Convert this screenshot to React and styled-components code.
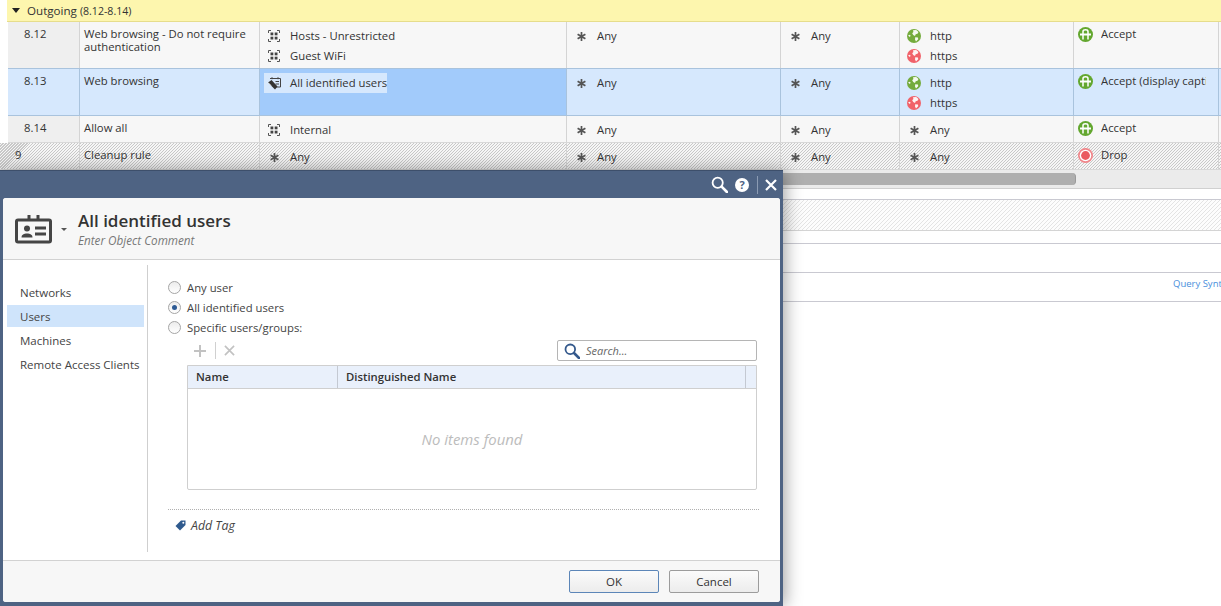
import React from "react";
import styled, { createGlobalStyle, css } from "styled-components";

const Global = createGlobalStyle`
  html, body { margin: 0; padding: 0; background: #fff; }
  body { font-family: "Open Sans", "Noto Sans", sans-serif; font-size: 11.3px; color: #333; }
`;

const hatch = (a, b, pitch) => `repeating-linear-gradient(135deg, ${a} 0 0.71px, ${b} 0.71px ${pitch}px)`;

const Page = styled.div`
  position: relative;
  width: 1221px;
  height: 606px;
  overflow: hidden;
  background: #fff;
`;

const GroupBar = styled.div`
  display: flex;
  align-items: center;
  height: 21px;
  margin-left: 7px;
  padding-left: 5px;
  background: #fdf6ae;
  border-bottom: 1px solid #e6dd8c;
  color: #333;
  gap: 7px;
  font-size: 11.6px;
`;
const Caret = styled.span`
  width: 0; height: 0;
  border-left: 4px solid transparent;
  border-right: 4px solid transparent;
  border-top: 5px solid #222;
`;
const GroupRange = styled.span` font-size: 10.6px; margin-left: -4px; `;

const Row = styled.div`
  display: grid;
  grid-template-columns: ${p => (p.$cleanup ? "80px" : "72px")} 180px 307px 214px 119px 174px 145px 1fr;
  height: ${p => p.$h}px;
  margin-left: ${p => (p.$cleanup ? 0 : 8)}px;
  box-sizing: border-box;
  border-bottom: 1px solid ${p => (p.$selected ? "#a9c3dd" : "#d8d8d8")};
  background: ${p => (p.$selected ? "#d6e8fd" : p.$cleanup ? hatch("#c8c8c8", "#f6f6f6", 2.121) : "#f7f7f7")};
  ${p => p.$beforeSelected && css`border-bottom-color: #a9c3dd;`}
`;
const Cell = styled.div`
  min-width: 0;
  padding-top: 3px;
  border-right: 1px solid ${p => (p.$selected ? "#a9c3dd" : "#d4d4d4")};
  background: ${p => (p.$hot ? "#a2cbfb" : "transparent")};
`;
const NumCell = styled(Cell)`
  padding: 5px 0 0 ${p => (p.$cleanup ? 15 : 16)}px;
  background: ${p => (p.$selected || p.$cleanup ? "transparent" : "#efefef")};
  color: #333;
  line-height: 14px;
`;
const NameCell = styled(Cell)`
  padding: 5px 4px 0 4px;
  line-height: 13px;
`;
const Item = styled.div`
  display: flex;
  align-items: center;
  height: 20px;
  padding-left: 4px;
  gap: 6px;
  white-space: nowrap;
`;
const Chip = styled(Item)`
  width: fit-content;
  box-sizing: border-box;
  margin: 1px 0 0 4px;
  padding: 0 0 2px 0;
  background: #d6e8fd;
`;
const IconSlot = styled.span`
  display: flex;
  align-items: center;
  justify-content: center;
  width: 20px;
  flex: none;
  padding-top: 2px;
`;
const ActionItem = styled.div`
  display: flex;
  align-items: center;
  height: 18px;
  padding-left: 3px;
  gap: 8px;
  margin-top: -1px;
`;
const ActionSlot = styled.span`
  display: flex;
  justify-content: center;
  width: 16px;
  flex: none;
  padding-top: 2px;
`;
const ActionText = styled.span`
  display: block;
  width: 105px;
  overflow: hidden;
  white-space: nowrap;
`;

const ScrollTrack = styled.div`
  height: 19px;
  box-sizing: border-box;
  padding-top: 3px;
  background: #ebebeb;
  border-bottom: 1px solid #d0d0d0;
`;
const ScrollThumb = styled.div`
  width: 1076px;
  height: 12px;
  border-radius: 0 4px 4px 0;
  background: #afafaf;
  border-right: 1px solid #999;
  box-sizing: border-box;
`;
const Band = styled.div`
  height: ${p => p.$h}px;
  border-bottom: 1px solid ${p => p.$line || "#c9c9d1"};
  ${p => p.$hatched && css`background: ${hatch("#e4e4e4", "#fdfdfd", 2.828)};`}
`;
const QueryBand = styled(Band)`
  display: flex;
  align-items: center;
  justify-content: flex-start;
  box-sizing: border-box;
  height: 29px;
  padding: 0 0 8px 1173px;
  white-space: nowrap;
  font-size: 9.5px;
  color: #4a8fdc;
`;

/* Dialog overlay */
const Dialog = styled.div`
  position: absolute;
  left: 0;
  top: 170px;
  width: 783px;
  height: 436px;
  box-sizing: border-box;
  background: #4e6383;
  border-top: 1px solid #3d4f6b;
  padding: 0 3px 4px 3px;
  display: flex;
  flex-direction: column;
  box-shadow: 2px 0 16px rgba(0, 0, 0, 0.38);
`;
const TitleBar = styled.div`
  display: flex;
  align-items: center;
  justify-content: flex-end;
  height: 27px;
  flex: none;
  padding-right: 3px;
`;
const TitleButton = styled.span`
  display: flex;
  align-items: center;
  margin-left: ${p => p.$gap || 0}px;
`;
const TitleDivider = styled.span`
  width: 1px;
  height: 18px;
  background: #8b9bb3;
  margin: 0 7px 0 8px;
`;
const Panel = styled.div`
  flex: 1;
  display: flex;
  flex-direction: column;
  background: #fff;
  border-radius: 3px;
  overflow: hidden;
`;
const Header = styled.div`
  display: flex;
  align-items: flex-start;
  height: 62px;
  flex: none;
  box-sizing: border-box;
  background: #f7f7f7;
  border-bottom: 1px solid #d2d2d2;
  padding: 17px 0 0 12px;
`;
const HeaderCaret = styled.span`
  width: 0; height: 0;
  margin: 13px 0 0 9px;
  border-left: 3px solid transparent;
  border-right: 3px solid transparent;
  border-top: 3px solid #555;
`;
const HeaderText = styled.div`
  margin: -7px 0 0 11px;
`;
const Title = styled.div`
  font-size: 17px;
  font-weight: 600;
  line-height: 26px;
  color: #333;
`;
const Comment = styled.div`
  font-size: 11.7px;
  font-style: italic;
  color: #777;
  line-height: 14px;
  margin-top: -1px;
`;
const Body = styled.div`
  flex: 1;
  display: flex;
  min-height: 0;
`;
const Sidebar = styled.div`
  width: 145px;
  flex: none;
  margin: 5px 0 8px 0;
  padding: 16px 3px 0 4px;
  box-sizing: border-box;
  border-right: 1px solid #cfcfcf;
`;
const NavItem = styled.div`
  height: 22px;
  margin-bottom: 2px;
  padding-left: 13px;
  font-size: 11.5px;
  line-height: 24px;
  color: #444;
  white-space: nowrap;
  ${p => p.$active && css`background: #cfe4fb;`}
`;
const Content = styled.div`
  flex: 1;
  padding: 17px 22px 0 20px;
  min-width: 0;
`;
const RadioRow = styled.div`
  display: flex;
  align-items: center;
  height: 20px;
  gap: 6px;
  color: #444;
`;
const Radio = styled.span`
  display: flex;
  align-items: center;
  justify-content: center;
  width: 13px;
  height: 13px;
  box-sizing: border-box;
  border-radius: 50%;
  border: 1px solid #a5a5a5;
  background: linear-gradient(#ececec, #fff);
  &::after {
    content: "";
    display: ${p => (p.$on ? "block" : "none")};
    width: 5px;
    height: 5px;
    border-radius: 50%;
    background: #2d5a94;
  }
`;
const Toolbar = styled.div`
  display: flex;
  align-items: center;
  height: 21px;
  margin: 3px 0 4px 0;
  padding-left: 25px;
`;
const ToolDivider = styled.span`
  width: 1px;
  height: 17px;
  background: #d0d0d0;
  margin: 0 8px;
`;
const SearchBox = styled.div`
  display: flex;
  align-items: center;
  width: 200px;
  height: 21px;
  margin-left: auto;
  margin-right: 1px;
  box-sizing: border-box;
  border: 1px solid #b5b5b5;
  border-radius: 2px;
  padding-left: 6px;
  gap: 6px;
  font-style: italic;
  font-size: 11px;
  color: #666;
`;
const Grid = styled.div`
  height: 125px;
  margin: 0 1px 0 19px;
  box-sizing: border-box;
  border: 1px solid #cfcfcf;
  border-radius: 0 0 2px 2px;
  display: flex;
  flex-direction: column;
`;
const GridHead = styled.div`
  display: grid;
  grid-template-columns: 150px 408px 1fr;
  height: 23px;
  flex: none;
  box-sizing: border-box;
  background: #e9f0fb;
  border-bottom: 1px solid #cfcfcf;
`;
const HeadCell = styled.div`
  padding-left: 8px;
  line-height: 22px;
  font-weight: 600;
  color: #333;
  border-right: 1px solid #c4c9d2;
  &:last-child { border-right: 0; }
`;
const Empty = styled.div`
  flex: 1;
  display: flex;
  align-items: center;
  justify-content: center;
  font-style: italic;
  font-size: 14.9px;
  color: #bcbcbc;
`;
const TagRow = styled.div`
  display: flex;
  align-items: center;
  height: 31px;
  margin-top: 19px;
  padding-left: 7px;
  gap: 5px;
  border-top: 1px dotted #b0b0b0;
  font-style: italic;
  font-size: 12.3px;
  color: #444;
  margin-right: -1px;
`;
const Footer = styled.div`
  display: flex;
  align-items: flex-start;
  justify-content: flex-end;
  gap: 10px;
  height: 42px;
  flex: none;
  box-sizing: border-box;
  background: #f7f7f7;
  border-top: 1px solid #d2d2d2;
  padding: 9px 21px 0 0;
`;
const Button = styled.button`
  width: 90px;
  height: 23px;
  padding: 0;
  border: 1px solid ${p => (p.$primary ? "#5c86b8" : "#9c9c9c")};
  border-radius: 2px;
  background: linear-gradient(#fbfbfb, #ececec);
  font: inherit;
  font-size: 11.5px;
  color: #333;
`;

/* Icons */
const NetIcon = () => (
  <svg width="12" height="12" viewBox="0 0 12 12" fill="none" stroke="#555" strokeWidth="1">
    <path d="M.5 3V.5H3M9 .5h2.500V3M.5 9v2.500H3M9 11.500h2.500V9" />
    <g fill="#444" stroke="none">
      <rect x="2.500" y="2.500" width="2.800" height="2.800" />
      <rect x="6.700" y="2.500" width="2.800" height="2.800" />
      <rect x="2.500" y="6.700" width="2.800" height="2.800" />
      <rect x="6.700" y="6.700" width="2.800" height="2.800" />
    </g>
  </svg>
);
const AnyIcon = () => (
  <svg width="9" height="9" viewBox="0 0 9 9" stroke="#555" strokeWidth="1.700">
    <path d="M4.500 0v9M.6 2.200l7.800 4.600M8.400 2.200L.6 6.800" />
  </svg>
);
const UsersIcon = () => (
  <svg width="15" height="13" viewBox="0 0 15 13" fill="none">
    <path d="M3 1.500h10.500v8.500H9" stroke="#444" strokeWidth="1" />
    <path d="M5 .2v2M11 .2v2M8.500 4.500h3.500M8.500 7h3.500" stroke="#444" strokeWidth="1" />
    <path d="M1 5.500L4.500 3l6 6.500L8 12.500z" fill="#333" />
    <path d="M1 5.500l3 3" stroke="#fff" strokeWidth=".8" />
  </svg>
);
const Globe = ({ c }) => (
  <svg width="14" height="14" viewBox="0 0 14 14">
    <circle cx="7" cy="7" r="7" fill={c} />
    <path d="M6 1.200l3.200-.2 2.300 2-1 1.800-1.800.4L8 7 6.200 6 5.200 4.200 6.400 3zM8.200 8.200l2.800.4.2 1.600L9 12.500 8 10.500zM1 6.500l1.700-.7 1 1L2.800 8z" fill="#fff" opacity=".92" />
  </svg>
);
const Accept = () => (
  <svg width="15" height="15" viewBox="0 0 15 15">
    <circle cx="7.500" cy="7.500" r="7.500" fill="#63a72f" />
    <path d="M5 12.500V4.500Q5 2.800 7.500 2.800T10 4.500v8" fill="none" stroke="#fff" strokeWidth="1.500" />
    <path d="M2 7.500h11" stroke="#fff" strokeWidth="2" />
  </svg>
);
const Drop = () => (
  <svg width="15" height="15" viewBox="0 0 15 15">
    <circle cx="7.500" cy="7.500" r="7.500" fill="#f0868a" />
    <circle cx="7.500" cy="7.500" r="5.800" fill="#fff" />
    <circle cx="7.500" cy="7.500" r="4.400" fill="#ea5a60" />
  </svg>
);
const CardIcon = () => (
  <svg width="37" height="29" viewBox="0 0 37 29" fill="none">
    <rect x="1.500" y="5" width="34" height="22" rx="1.500" stroke="#454545" strokeWidth="3" />
    <path d="M14 0v5M23 0v5" stroke="#454545" strokeWidth="3" />
    <circle cx="12" cy="13.500" r="3" fill="#454545" />
    <path d="M6.500 22.500c0-3 2.500-4 5.500-4s5.500 1 5.500 4z" fill="#454545" />
    <path d="M20 13h11M20 19h11" stroke="#454545" strokeWidth="3" />
  </svg>
);
const SearchIcon = ({ c, size = 16, w = 2 }) => (
  <svg width={size} height={size} viewBox="0 0 16 16" fill="none" stroke={c}>
    <circle cx="6.300" cy="6.300" r="4.800" strokeWidth={w} />
    <path d="M10 10l5 5" strokeWidth={w + 0.8} strokeLinecap="round" />
  </svg>
);
const HelpIcon = () => (
  <svg width="14" height="14" viewBox="0 0 14 14">
    <circle cx="7" cy="7" r="7" fill="#fff" />
    <text x="7" y="11" textAnchor="middle" fontSize="11" fontWeight="700" fontFamily="Open Sans, sans-serif" fill="#4e6383">?</text>
  </svg>
);
const CloseIcon = ({ c = "#fff", size = 12, w = 2.200 }) => (
  <svg width={size} height={size} viewBox="0 0 12 12" stroke={c} strokeWidth={w}>
    <path d="M1 1l10 10M11 1L1 11" />
  </svg>
);
const PlusIcon = () => (
  <svg width="14" height="14" viewBox="0 0 14 14" stroke="#c2c2c2" strokeWidth="2">
    <path d="M7 1v12M1 7h12" />
  </svg>
);
const TagIcon = () => (
  <svg width="11" height="11" viewBox="0 0 11 11">
    <path d="M6 .5h4.500V5L5 10.500.5 6z" fill="#2f5a8e" />
    <circle cx="8.300" cy="2.700" r="1" fill="#fff" />
  </svg>
);

const Asset = ({ icon, children }) => (
  <Item>
    <IconSlot>{icon}</IconSlot>
    <span>{children}</span>
  </Item>
);
const Any = () => <Asset icon={<AnyIcon />}>Any</Asset>;
const Action = ({ icon, children }) => (
  <ActionItem>
    <ActionSlot>{icon}</ActionSlot>
    <ActionText>{children}</ActionText>
  </ActionItem>
);
const Services = () => (
  <>
    <Asset icon={<Globe c="#74ab3c" />}>http</Asset>
    <Asset icon={<Globe c="#f1626a" />}>https</Asset>
  </>
);

const RuleRow = ({ h, num, name, selected, cleanup, before, source, hot, service, action }) => (
  <Row $h={h} $selected={selected} $cleanup={cleanup} $beforeSelected={before}>
    <NumCell $selected={selected} $cleanup={cleanup}>{num}</NumCell>
    <NameCell $selected={selected}>{name}</NameCell>
    <Cell $selected={selected} $hot={hot}>{source}</Cell>
    <Cell $selected={selected}><Any /></Cell>
    <Cell $selected={selected}><Any /></Cell>
    <Cell $selected={selected}>{service}</Cell>
    <Cell $selected={selected}>{action}</Cell>
  </Row>
);

export default function App() {
  return (
    <Page>
      <Global />
      <GroupBar>
        <Caret />
        <span>Outgoing</span>
        <GroupRange>(8.12-8.14)</GroupRange>
      </GroupBar>
      <RuleRow
        h={47} num="8.12" name="Web browsing - Do not require authentication" before
        source={<><Asset icon={<NetIcon />}>Hosts - Unrestricted</Asset><Asset icon={<NetIcon />}>Guest WiFi</Asset></>}
        service={<Services />}
        action={<Action icon={<Accept />}>Accept</Action>}
      />
      <RuleRow
        h={47} num="8.13" name="Web browsing" selected hot
        source={<Chip><IconSlot><UsersIcon /></IconSlot><span>All identified users</span></Chip>}
        service={<Services />}
        action={<Action icon={<Accept />}>Accept (display captive portal)</Action>}
      />
      <RuleRow
        h={27} num="8.14" name="Allow all"
        source={<Asset icon={<NetIcon />}>Internal</Asset>}
        service={<Any />}
        action={<Action icon={<Accept />}>Accept</Action>}
      />
      <RuleRow
        h={27} num="9" name="Cleanup rule" cleanup
        source={<Any />}
        service={<Any />}
        action={<Action icon={<Drop />}>Drop</Action>}
      />
      <ScrollTrack><ScrollThumb /></ScrollTrack>
      <Band $h={10} />
      <Band $h={30} $hatched $line="#d4d4d4" />
      <Band $h={12} />
      <Band $h={28} />
      <QueryBand $h={28}>Query Syntax</QueryBand>

      <Dialog>
        <TitleBar>
          <TitleButton><SearchIcon c="#fff" size={17} w={1.700} /></TitleButton>
          <TitleButton $gap={7}><HelpIcon /></TitleButton>
          <TitleDivider />
          <TitleButton><CloseIcon /></TitleButton>
        </TitleBar>
        <Panel>
          <Header>
            <CardIcon />
            <HeaderCaret />
            <HeaderText>
              <Title>All identified users</Title>
              <Comment>Enter Object Comment</Comment>
            </HeaderText>
          </Header>
          <Body>
            <Sidebar>
              <NavItem>Networks</NavItem>
              <NavItem $active>Users</NavItem>
              <NavItem>Machines</NavItem>
              <NavItem>Remote Access Clients</NavItem>
            </Sidebar>
            <Content>
              <RadioRow><Radio />Any user</RadioRow>
              <RadioRow><Radio $on />All identified users</RadioRow>
              <RadioRow><Radio />Specific users/groups:</RadioRow>
              <Toolbar>
                <PlusIcon />
                <ToolDivider />
                <CloseIcon c="#c2c2c2" size={11} w={1.800} />
                <SearchBox>
                  <SearchIcon c="#34598c" size={16} w={1.800} />
                  Search...
                </SearchBox>
              </Toolbar>
              <Grid>
                <GridHead>
                  <HeadCell>Name</HeadCell>
                  <HeadCell>Distinguished Name</HeadCell>
                  <HeadCell />
                </GridHead>
                <Empty>No items found</Empty>
              </Grid>
              <TagRow><TagIcon />Add Tag</TagRow>
            </Content>
          </Body>
          <Footer>
            <Button $primary>OK</Button>
            <Button>Cancel</Button>
          </Footer>
        </Panel>
      </Dialog>
    </Page>
  );
}
